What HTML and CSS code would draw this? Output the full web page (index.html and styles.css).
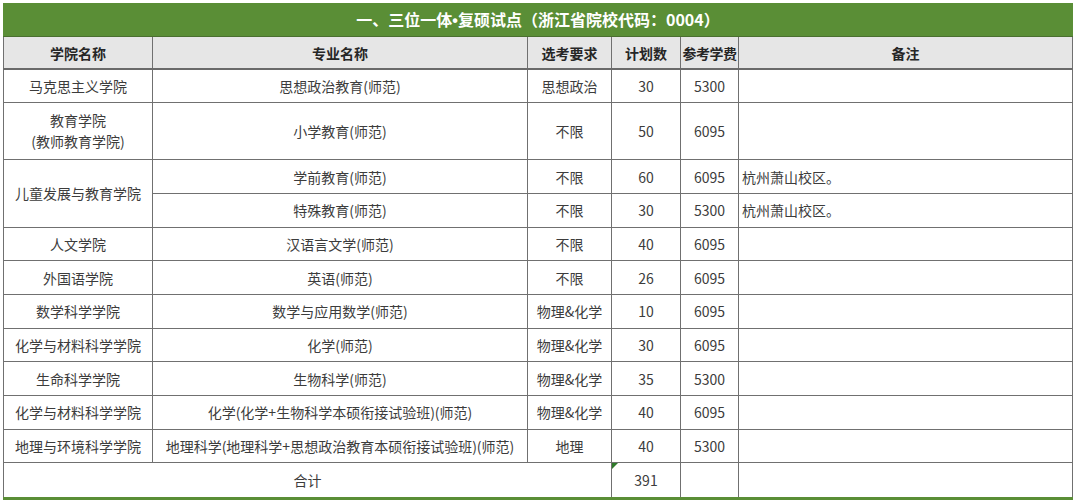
FILE: index.html
```html
<!DOCTYPE html>
<html lang="zh">
<head>
<meta charset="utf-8">
<link rel="stylesheet" href="styles.css">
</head>
<body>
<table class="plan">
  <colgroup>
    <col class="c1"><col class="c2"><col class="c3"><col class="c4"><col class="c5"><col class="c6">
  </colgroup>
  <thead>
    <tr class="title-row"><th colspan="6">一、三位一体<span class="dot">•</span>复硕试点（浙江省院校代码：0004）</th></tr>
    <tr class="head-row">
      <th>学院名称</th><th>专业名称</th><th>选考要求</th><th>计划数</th><th class="tight">参考学费</th><th>备注</th>
    </tr>
  </thead>
  <tbody>
    <tr><td>马克思主义学院</td><td>思想政治教育(师范)</td><td>思想政治</td><td>30</td><td>5300</td><td class="note"></td></tr>
    <tr class="tall"><td>教育学院<br>(教师教育学院)</td><td>小学教育(师范)</td><td>不限</td><td>50</td><td>6095</td><td class="note"></td></tr>
    <tr><td rowspan="2">儿童发展与教育学院</td><td>学前教育(师范)</td><td>不限</td><td>60</td><td>6095</td><td class="note">杭州萧山校区。</td></tr>
    <tr><td>特殊教育(师范)</td><td>不限</td><td>30</td><td>5300</td><td class="note">杭州萧山校区。</td></tr>
    <tr><td>人文学院</td><td>汉语言文学(师范)</td><td>不限</td><td>40</td><td>6095</td><td class="note"></td></tr>
    <tr><td>外国语学院</td><td>英语(师范)</td><td>不限</td><td>26</td><td>6095</td><td class="note"></td></tr>
    <tr><td>数学科学学院</td><td>数学与应用数学(师范)</td><td>物理&amp;化学</td><td>10</td><td>6095</td><td class="note"></td></tr>
    <tr><td>化学与材料科学学院</td><td>化学(师范)</td><td>物理&amp;化学</td><td>30</td><td>6095</td><td class="note"></td></tr>
    <tr><td>生命科学学院</td><td>生物科学(师范)</td><td>物理&amp;化学</td><td>35</td><td>5300</td><td class="note"></td></tr>
    <tr><td>化学与材料科学学院</td><td>化学(化学+生物科学本硕衔接试验班)(师范)</td><td>物理&amp;化学</td><td>40</td><td>6095</td><td class="note"></td></tr>
    <tr><td>地理与环境科学学院</td><td>地理科学(地理科学+思想政治教育本硕衔接试验班)(师范)</td><td>地理</td><td>40</td><td>5300</td><td class="note"></td></tr>
    <tr class="total"><td colspan="3">合计</td><td class="marked"><span class="tri"></span>391</td><td></td><td class="note"></td></tr>
  </tbody>
</table>
</body>
</html>
```
FILE: styles.css
```css
html, body {
  margin: 0;
  padding: 0;
  background: #ffffff;
}
body {
  padding: 3px 2px 0 3px;
  font-family: "Noto Sans CJK SC", "Noto Sans", sans-serif;
  color: #3c3c3c;
}
.plan {
  width: 1069px;
  border-collapse: collapse;
  table-layout: fixed;
  font-size: 14px;
}
.c1 { width: 149px; }
.c2 { width: 375px; }
.c3 { width: 84px; }
.c4 { width: 69px; }
.c5 { width: 58px; }
.c6 { width: 334px; }

.plan th, .plan td {
  border: 1px solid #707070;
  text-align: center;
  vertical-align: middle;
  padding: 0;
  line-height: 20px;
}
.title-row th {
  background: #5a8e36;
  color: #ffffff;
  font-size: 16px;
  font-weight: bold;
  height: 32px;
  border: 1px solid #5a8e36;
  border-bottom: 1px solid #4a6f30;
}
.title-row .dot {
  font-family: "Liberation Sans", sans-serif;
}
.head-row th {
  background: #e6e6e6;
  color: #262626;
  font-weight: bold;
  font-size: 14px;
  height: 31px;
  border-bottom: 2px solid #6a6a6a;
}
.head-row th.tight {
  letter-spacing: -0.5px;
}
.plan tbody tr { height: 33.7px; }
.plan tbody tr.tall { height: 57px; }
.plan tbody tr.tall td { line-height: 21px; }
.plan tbody tr.total { height: 36px; }
.plan td.note {
  text-align: left;
  padding-left: 3px;
}
.plan tr.total td {
  border-bottom: 3px solid #5a8e36;
}
.marked {
  position: relative;
}
.tri {
  position: absolute;
  left: 0;
  top: 0;
  width: 0;
  height: 0;
  border-top: 6px solid #2f7a2a;
  border-right: 6px solid transparent;
}
```
